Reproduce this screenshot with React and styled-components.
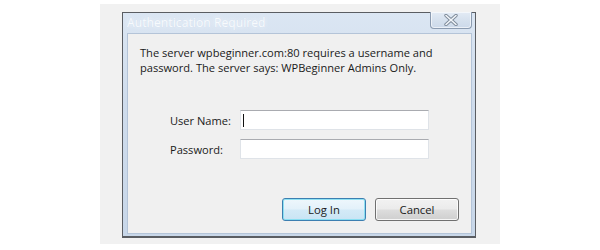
import React from "react";
import styled, { createGlobalStyle } from "styled-components";

const Global = createGlobalStyle`
  html, body { margin: 0; padding: 0; background: #ffffff; }
  body { width: 600px; height: 250px; overflow: hidden; font-family: "Open Sans", "Noto Sans", sans-serif; }
`;

const Page = styled.div`
  width: 600px;
  height: 250px;
  box-sizing: border-box;
  padding: 4px 0 0 100px;
`;

const Stage = styled.div`
  width: 400px;
  height: 240px;
  box-sizing: border-box;
  background: #f1f1f1;
  padding: 8px 0 0 22px;
`;

const Window = styled.div`
  width: 354px;
  height: 226px;
  box-sizing: border-box;
  border: 1px solid #5a5d62;
  border-bottom-width: 2px;
  background: linear-gradient(180deg, #dbe6f3 0%, #cfdcec 40%, #c8d7e9 100%);
  display: flex;
  flex-direction: column;
`;

const TitleBar = styled.div`
  height: 20px;
  display: flex;
  align-items: flex-start;
  justify-content: space-between;
  padding: 0 3px 0 4px;
`;

const Title = styled.span`
  font-size: 12px;
  line-height: 20px;
  color: #f7fafd;
  text-shadow: 0 0 4px rgba(255, 255, 255, 0.9), 0 0 1px rgba(170, 195, 225, 0.6);
  letter-spacing: 0.1px;
`;

const CloseButton = styled.div`
  width: 42px;
  height: 17px;
  box-sizing: border-box;
  margin-top: -1px;
  border: 1px solid #8b9bb0;
  border-top: none;
  border-radius: 0 0 4px 4px;
  background: linear-gradient(180deg, #e3ebf5 0%, #d6e1ee 50%, #ccd9ea 100%);
  box-shadow: inset 0 0 0 1px rgba(255, 255, 255, 0.6);
  display: flex;
  align-items: center;
  justify-content: center;
`;

const Panel = styled.div`
  flex: 1;
  margin: 0 3px 2px 4px;
  background: #f0f0f0;
  border: 1px solid #b4c4d8;
  display: flex;
  flex-direction: column;
  padding: 11px 12px 12px 12px;
`;

const Message = styled.p`
  margin: 0;
  font-size: 11.1px;
  line-height: 15px;
  color: #1a1a1a;
`;

const Form = styled.div`
  margin: 35px 0 0 30px;
  display: grid;
  grid-template-columns: 70px 189px;
  row-gap: 9px;
  align-items: center;
`;

const Label = styled.label`
  font-size: 11.1px;
  color: #1a1a1a;
`;

const Field = styled.div`
  height: 20px;
  box-sizing: border-box;
  background: #ffffff;
  border: 1px solid #dfe3e8;
  border-top-color: #a9abb0;
  position: relative;
`;

const Caret = styled.span`
  position: absolute;
  left: 2px;
  top: 3px;
  width: 1px;
  height: 13px;
  background: #111;
`;

const Buttons = styled.div`
  margin-top: auto;
  display: flex;
  justify-content: flex-end;
  gap: 9px;
`;

const Button = styled.div`
  width: 84px;
  height: 23px;
  box-sizing: border-box;
  border-radius: 3px;
  border: 1px solid ${(p) => (p.$default ? "#3c7fb1" : "#707070")};
  background: ${(p) =>
    p.$default
      ? "linear-gradient(180deg, #eef7fc 0%, #e3f1fa 48%, #d3eaf7 52%, #c9e4f4 100%)"
      : "linear-gradient(180deg, #f2f2f2 0%, #ebebeb 48%, #dddddd 52%, #cfcfcf 100%)"};
  box-shadow: inset 0 0 0 1px
    ${(p) => (p.$default ? "rgba(120, 220, 240, 0.8)" : "rgba(255, 255, 255, 0.8)")};
  display: flex;
  align-items: center;
  justify-content: center;
  font-size: 11.3px;
  color: #1a1a1a;
`;

const CloseGlyph = () => (
  <svg width="16" height="12" viewBox="0 0 16 12">
    <path d="M3 1.5 L13 10.5 M13 1.5 L3 10.5" stroke="#7d8a99" strokeWidth="3.4" strokeLinecap="round" />
    <path d="M3 1.5 L13 10.5 M13 1.5 L3 10.5" stroke="#f3f6fa" strokeWidth="1.6" strokeLinecap="round" />
  </svg>
);

export default function App() {
  return (
    <>
      <Global />
      <Page>
        <Stage>
          <Window>
            <TitleBar>
              <Title>Authentication Required</Title>
              <CloseButton>
                <CloseGlyph />
              </CloseButton>
            </TitleBar>
            <Panel>
              <Message>
                The server wpbeginner.com:80 requires a username and
                <br />
                password. The server says: WPBeginner Admins Only.
              </Message>
              <Form>
                <Label>User Name:</Label>
                <Field>
                  <Caret />
                </Field>
                <Label>Password:</Label>
                <Field />
              </Form>
              <Buttons>
                <Button $default>Log In</Button>
                <Button>Cancel</Button>
              </Buttons>
            </Panel>
          </Window>
        </Stage>
      </Page>
    </>
  );
}
